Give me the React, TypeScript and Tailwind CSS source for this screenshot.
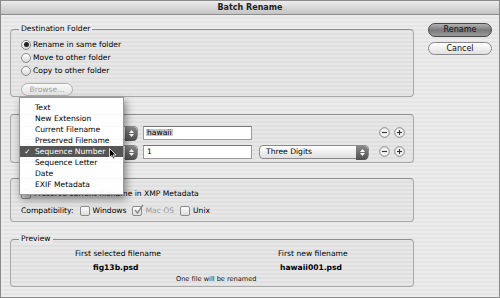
import React from 'react';

const FONT = "font-['DejaVu_Sans',sans-serif]";

function Radio({ checked, label }: { checked?: boolean; label: string }) {
  return (
    <div className="flex items-center h-[13px] gap-[2px]">
      <span className="w-[10px] h-[10px] rounded-full border border-[#8a8a8a] bg-gradient-to-b from-white to-[#d8d8d8] flex items-center justify-center">
        {checked && <span className="w-[5px] h-[5px] rounded-full bg-[#222]" />}
      </span>
      <span className="text-black">{label}</span>
    </div>
  );
}

function Check({ checked, disabled, label }: { checked?: boolean; disabled?: boolean; label: string }) {
  return (
    <div className="flex items-center gap-[3px]">
      <span className="relative w-[10px] h-[10px] rounded-[2px] border border-[#8a8a8a] bg-gradient-to-b from-white to-[#dcdcdc]">
        {checked && (
          <svg className="absolute -top-[3px] left-0" width="11" height="11" viewBox="0 0 11 11">
            <path d="M2 6 L4.5 9 L10 1" fill="none" stroke="#8a8a8a" strokeWidth="1.4" />
          </svg>
        )}
      </span>
      <span className={disabled ? 'text-[#9a9a9a]' : 'text-black'}>{label}</span>
    </div>
  );
}

function Stepper() {
  return (
    <span className="w-[12px] h-[14px] rounded-r-[4px] bg-gradient-to-b from-[#8a8a8a] to-[#4f4f4f] flex flex-col items-center justify-center gap-[1px]">
      <svg width="5" height="3" viewBox="0 0 5 3"><path d="M0 3 L2.5 0 L5 3Z" fill="#fff" /></svg>
      <svg width="5" height="3" viewBox="0 0 5 3"><path d="M0 0 L2.5 3 L5 0Z" fill="#fff" /></svg>
    </span>
  );
}

function RoundBtn({ sign }: { sign: '-' | '+' }) {
  return (
    <svg width="11" height="11" viewBox="0 0 11 11">
      <circle cx="5.5" cy="5.5" r="4.8" fill="#f2f2f2" stroke="#7a7a7a" strokeWidth="0.9" />
      <path d="M3 5.5 H8" stroke="#333" strokeWidth="1.1" />
      {sign === '+' && <path d="M5.5 3 V8" stroke="#333" strokeWidth="1.1" />}
    </svg>
  );
}

function NameRow({ value, selected, third }: { value: string; selected?: boolean; third?: boolean }) {
  return (
    <div className="flex items-center h-[15px]">
      <div className="w-[117px] h-[14px] flex rounded-[4px] border border-[#8a8a8a] bg-gradient-to-b from-white to-[#e2e2e2]">
        <span className="flex-1" />
        <Stepper />
      </div>
      <div className="ml-[5px] w-[109px] h-[14px] border border-[#9a9a9a] border-t-[#777] bg-white flex items-center px-[2px]">
        <span className={selected ? 'bg-[#c8c8c8] px-[1px]' : 'px-[1px]'}>{value}</span>
      </div>
      {third ? (
        <div className="ml-[7px] w-[110px] h-[14px] flex rounded-[4px] border border-[#8a8a8a] bg-gradient-to-b from-white to-[#e0e0e0]">
          <span className="flex-1 pl-[6px] leading-[12px] text-black">Three Digits</span>
          <Stepper />
        </div>
      ) : (
        <span className="w-[117px]" />
      )}
      <div className="ml-[10px] flex gap-[4px]">
        <RoundBtn sign="-" />
        <RoundBtn sign="+" />
      </div>
    </div>
  );
}

const MENU = ['Text', 'New Extension', 'Current Filename', 'Preserved Filename', 'Sequence Number', 'Sequence Letter', 'Date', 'EXIF Metadata'];

export default function App() {
  return (
    <div className={`${FONT} text-[7.6px] leading-none w-[500px] h-[298px] relative overflow-hidden border border-[#8a8a8a] bg-[repeating-linear-gradient(0deg,#ececec_0px,#ececec_2px,#e4e4e4_2px,#e4e4e4_4px)] flex flex-col`}>
      <div className="h-[14px] shrink-0 bg-gradient-to-b from-[#ececec] to-[#c4c4c4] border-b border-[#8c8c8c] flex items-center justify-center">
        <span className="font-bold text-[#222] text-[8px]">Batch Rename</span>
      </div>

      <div className="flex pl-[9px]">
        <div className="w-[404px] flex flex-col">
          {/* Destination Folder */}
          <div className="relative mt-[14px] h-[68px] rounded-[4px] border border-[#a8a8a8] border-t-[#8e8e8e] bg-black/[0.02] pl-[10px] pt-[8px]">
            <span className="absolute -top-[5px] left-[8px] px-[2px] bg-[#e9e9e9] text-black">Destination Folder</span>
            <Radio checked label="Rename in same folder" />
            <Radio label="Move to other folder" />
            <Radio label="Copy to other folder" />
            <div className="mt-[6px] w-[52px] h-[13px] rounded-full border border-[#b0b0b0] bg-gradient-to-b from-[#fafafa] to-[#e4e4e4] flex items-center justify-center text-[#9a9a9a]">
              Browse...
            </div>
          </div>

          {/* New Filenames (legend hidden under the open menu) */}
          <div className="relative mt-[17px] h-[49px] rounded-[4px] border border-[#a8a8a8] border-t-[#8e8e8e] bg-black/[0.02] pl-[10px] pt-[10px] flex flex-col gap-[4px]">
            <NameRow value="hawaii" selected />
            <NameRow value="1" third />
          </div>

          {/* Options */}
          <div className="relative mt-[15px] h-[44px] rounded-[4px] border border-[#a8a8a8] border-t-[#8e8e8e] bg-black/[0.02] pl-[10px] pt-[10px] flex flex-col gap-[7px]">
            <Check label="Preserve current filename in XMP Metadata" />
            <div className="flex items-center gap-[6px]">
              <span className="text-black">Compatibility:</span>
              <Check label="Windows" />
              <Check checked disabled label="Mac OS" />
              <Check label="Unix" />
            </div>
          </div>

          {/* Preview */}
          <div className="relative mt-[17px] h-[48px] rounded-[4px] border border-[#a8a8a8] border-t-[#8e8e8e] bg-black/[0.02] pt-[10px]">
            <span className="absolute -top-[5px] left-[8px] px-[2px] bg-[#e9e9e9] text-black">Preview</span>
            <div className="flex">
              <div className="w-[203px] pl-[64px] flex flex-col gap-[6px]">
                <span className="text-black">First selected filename</span>
                <span className="pl-[18px] font-bold text-black">fig13b.psd</span>
              </div>
              <div className="flex flex-col gap-[6px] pl-[64px]">
                <span className="text-black">First new filename</span>
                <span className="pl-[2px] font-bold text-black">hawaii001.psd</span>
              </div>
            </div>
            <div className="mt-[5px] pl-[165px] text-[6.6px] text-[#111]">One file will be renamed</div>
          </div>
        </div>

        <div className="ml-[14px] mt-[8px] w-[64px] flex flex-col gap-[5px]">
          <div className="h-[14px] rounded-full border border-[#4a4a4a] bg-gradient-to-b from-[#b4b4b4] via-[#7a7a7a] to-[#9a9a9a] flex items-center justify-center text-[#111] text-[8px]">
            Rename
          </div>
          <div className="h-[13px] rounded-full border border-[#8a8a8a] bg-gradient-to-b from-white to-[#e0e0e0] flex items-center justify-center text-[#111] text-[8px]">
            Cancel
          </div>
        </div>
      </div>

      {/* open popup menu */}
      <div className="absolute left-[18px] top-[96px] w-[105px] py-[4px] bg-white/95 border border-[#9a9a9a] shadow-[2px_4px_8px_rgba(0,0,0,0.45)]">
        {MENU.map(m => (
          <div key={m} className={`h-[11px] flex items-center ${m === 'Sequence Number' ? 'bg-[#555] text-white' : 'text-black'}`}>
            <span className="w-[15px] text-center">{m === 'Sequence Number' ? '✓' : ''}</span>
            <span>{m}</span>
          </div>
        ))}
      </div>

      {/* cursor */}
      <svg className="absolute left-[108px] top-[147px]" width="8" height="12" viewBox="0 0 8 12">
        <path d="M0.5 0.5 L0.5 9.5 L2.6 7.6 L4.2 11 L5.6 10.4 L4 7 L7 7 Z" fill="#000" stroke="#fff" strokeWidth="0.8" />
      </svg>
    </div>
  );
}
